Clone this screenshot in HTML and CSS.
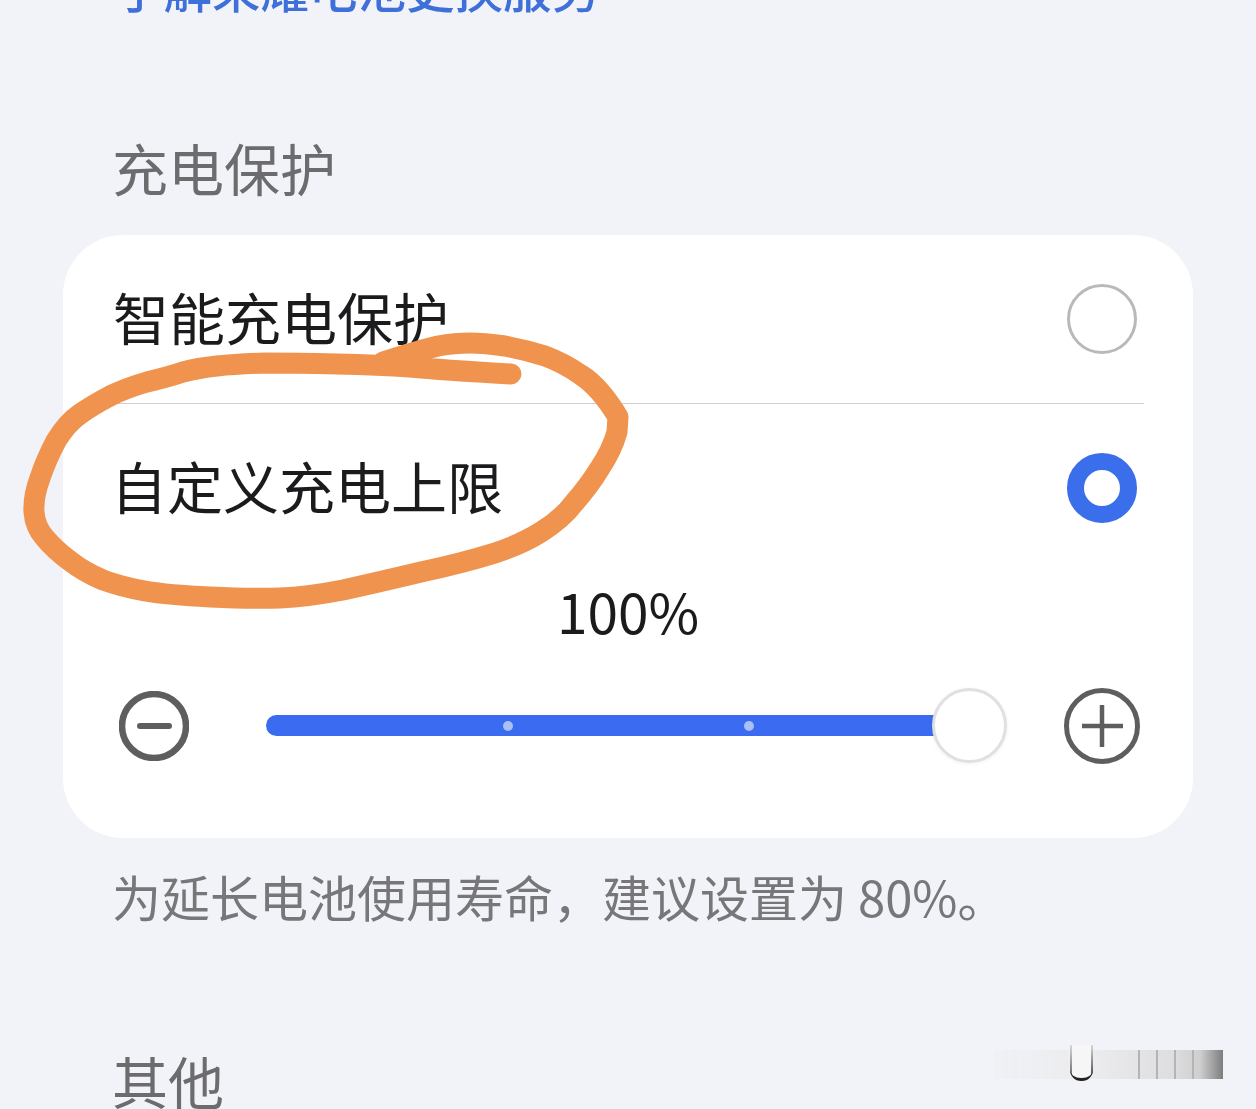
FILE: index.html
```html
<!DOCTYPE html>
<html lang="zh-CN">
  <head>
    <meta charset="UTF-8" />
    <meta name="viewport" content="width=device-width, initial-scale=1.0" />
    <title>充电保护</title>
    <link rel="stylesheet" href="styles.css">
  </head>
  <body>
    <div class="page">
      <a class="service-link">了解荣耀电池更换服务</a>

      <h2 class="section-title">充电保护</h2>

      <div class="card">
        <div class="row">
          <span class="row-label">智能充电保护</span>
          <span class="radio"></span>
        </div>
        <div class="divider"></div>
        <div class="row">
          <span class="row-label row-label-custom">自定义充电上限</span>
          <span class="radio radio-on"></span>
        </div>

        <div class="percent">100%</div>

        <div class="slider-row">
          <svg class="icon-minus" width="70" height="70" viewBox="0 0 70 70">
            <circle cx="35" cy="35" r="32" fill="none" stroke="#5e5e5e" stroke-width="6.5" />
            <line x1="21" y1="35" x2="50" y2="35" stroke="#5e5e5e" stroke-width="6" stroke-linecap="round" />
          </svg>
          <div class="slider">
            <div class="slider-fill">
              <span class="slider-dot"></span>
              <span class="slider-dot"></span>
            </div>
            <div class="slider-thumb"></div>
          </div>
          <svg class="icon-plus" width="76" height="76" viewBox="0 0 76 76">
            <circle cx="38" cy="38" r="35.5" fill="none" stroke="#5e5e5e" stroke-width="5" />
            <line x1="18" y1="38" x2="59" y2="38" stroke="#5e5e5e" stroke-width="4.5" />
            <line x1="38" y1="17" x2="38" y2="59" stroke="#5e5e5e" stroke-width="4.5" />
          </svg>
        </div>
      </div>

      <p class="note">为延长电池使用寿命，建议设置为 80%。</p>

      <h2 class="section-title section-title-other">其他</h2>

      <!-- hand drawn circle on top of the screenshot -->
      <svg class="scribble" width="1256" height="1109" viewBox="0 0 1256 1109">
        <path d="M511 374 Q442 370 410 367 Q379 365 337 364 Q295 363 265 363 Q236 364 217 366 Q198 368 183 372 Q168 377 147 382 Q126 388 110 396 Q93 405 80 414 Q67 423 56 441 Q46 460 40 478 Q33 497 34 512 Q35 527 45 538 Q55 550 70 561 Q84 572 103 580 Q122 587 145 591 Q168 595 210 597 Q252 599 280 598 Q307 597 343 590 Q379 582 421 572 Q463 563 495 553 Q522 544 541 532 Q562 519 574 503 Q589 486 600 468 Q612 450 617 432 L618 417 Q600 387 581 375 Q564 363 545 356 Q526 350 505 346 Q484 343 470 343 Q455 343 438 346 Q421 350 402 356 L383 362"
          fill="none" stroke="#f0934e" stroke-width="21" stroke-linecap="round" stroke-linejoin="round" />
      </svg>

      <!-- blurred watermark -->
      <div class="watermark">
        <span class="wm-cup"></span>
        <span class="wm-line"></span>
        <span class="wm-line"></span>
        <span class="wm-line"></span>
        <span class="wm-line"></span>
      </div>
    </div>
  </body>
</html>
```

FILE: styles.css
```css
* {
  box-sizing: border-box;
}
body {
  margin: 0;
  background: #f1f3f8;
  font-family: "Noto Sans CJK SC", "Noto Sans", sans-serif;
}
.page {
  position: relative;
  height: 1109px;
  padding: 0 63px;
  overflow: hidden;
}
.service-link {
  display: block;
  margin-top: -37px;
  padding-left: 52px;
  font-size: 48.5px;
  line-height: 48px;
  font-weight: 500;
  color: #3f6fd8;
}
.section-title {
  margin: 123px 0 0;
  padding-left: 49px;
  font-size: 56px;
  line-height: 66px;
  font-weight: 400;
  color: #6c6c6e;
}
.section-title-other {
  margin-top: 121px;
}
.card {
  margin-top: 35px;
  height: 603px;
  background: #fff;
  border-radius: 60px;
}
.row {
  display: flex;
  align-items: center;
  justify-content: space-between;
  height: 168px;
  padding: 0 56px 0 50px;
}
.row-label {
  padding-bottom: 6px;
  font-size: 56px;
  line-height: 66px;
  color: #1b1b1d;
}
.row-label-custom {
  margin-left: -2px;
}
.radio {
  width: 70px;
  height: 70px;
  border: 3.5px solid #b9b9b9;
  border-radius: 50%;
}
.radio-on {
  border: 17px solid #3b6eea;
}
.divider {
  height: 1px;
  margin: 0 49px 0 51px;
  background: #cfcfcf;
}
.percent {
  margin-top: 8px;
  text-align: center;
  font-size: 55px;
  line-height: 60px;
  color: #1b1b1d;
}
.slider-row {
  display: flex;
  align-items: center;
  margin-top: 48px;
  padding: 0 53px 0 56px;
}
.slider {
  flex: 1;
  display: flex;
  align-items: center;
  margin: 0 57px 1px 77px;
}
.slider-fill {
  flex: 1;
  display: flex;
  align-items: center;
  gap: 231px;
  height: 21px;
  margin-right: -4px;
  padding-left: 237px;
  background: #3a6bf0;
  border-radius: 11px 0 0 11px;
}
.slider-dot {
  width: 10px;
  height: 10px;
  border-radius: 50%;
  background: #a9c0f7;
}
.slider-thumb {
  position: relative;
  width: 75px;
  height: 75px;
  background: #fff;
  border: 3px solid #e0e0e0;
  border-radius: 50%;
  box-shadow: 0 1px 4px rgba(0, 0, 0, 0.06);
}
.note {
  margin: 28px 0 0;
  padding-left: 49px;
  font-size: 49px;
  line-height: 60px;
  color: #77777a;
}
.scribble {
  position: absolute;
  top: 0;
  left: 0;
  pointer-events: none;
}
.watermark {
  position: absolute;
  top: 1050px;
  left: 994px;
  display: flex;
  width: 229px;
  height: 29px;
  background: linear-gradient(to right, rgba(236, 236, 238, 0.2), #ebebed 45%, #dedee0 78%, #cfcfd0 90%, #7d7d7d);
  filter: blur(0.7px);
}
.wm-cup {
  width: 23px;
  height: 36px;
  margin: -5px 45px 0 76px;
  background:
    linear-gradient(#d8d8d8, #666) left / 2px 100% no-repeat,
    linear-gradient(#d8d8d8, #444) right / 2px 100% no-repeat,
    #f6f6f6;
  border-bottom: 3px solid #222;
  border-radius: 0 0 11px 11px;
}
.wm-line {
  width: 2px;
  margin-right: 16px;
  background: #b4b4b6;
}
```
